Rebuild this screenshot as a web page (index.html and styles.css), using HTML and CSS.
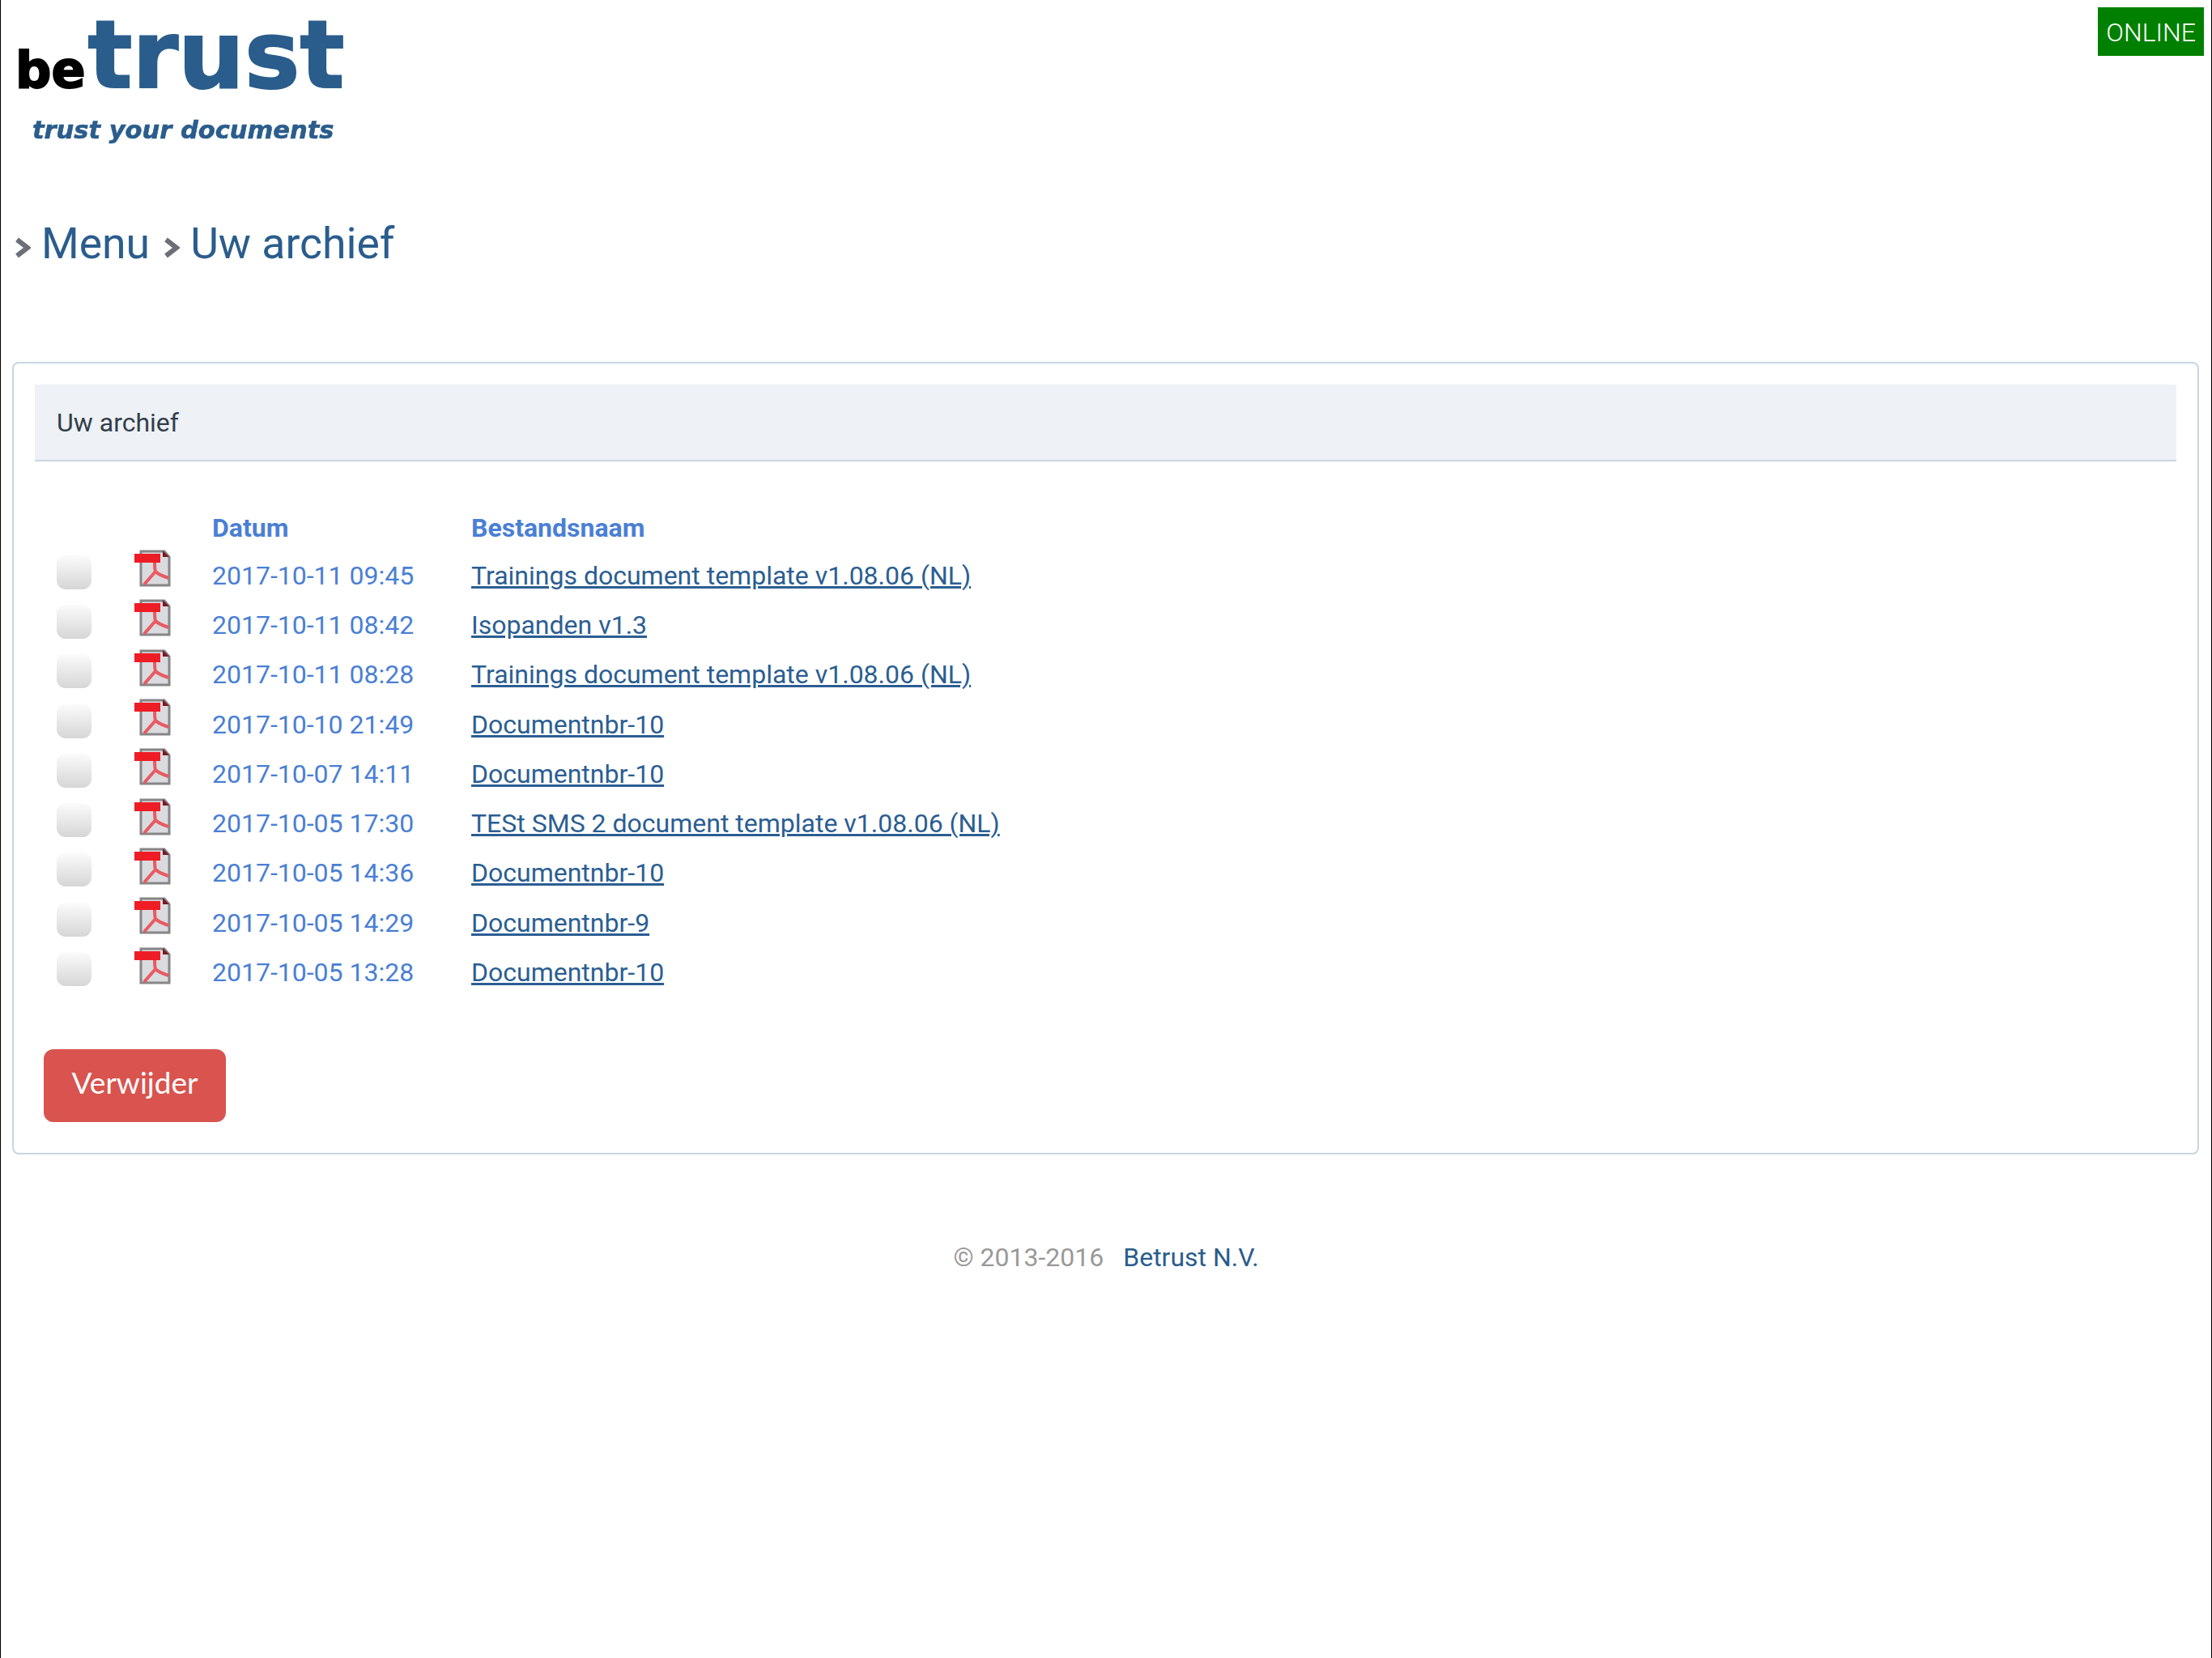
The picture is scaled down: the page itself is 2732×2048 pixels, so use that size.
FILE: index.html
```html
<!DOCTYPE html>
<html lang="nl">
<head>
    <meta charset="UTF-8">
    <title>Betrust - Uw archief</title>
    <link rel="stylesheet" href="styles.css">
</head>
<body>

<svg class="icon-defs" width="0" height="0">
    <symbol id="pdf-icon" viewBox="0 0 45 46">
        <path d="M8 2H37L43 9V44H8Z" fill="#dadbde" stroke="#868688" stroke-width="3"/>
        <path d="M35 1L43 9H35Z" fill="#7a1a24"/>
        <path d="M25 14C25 20 25 24 26 27M26 27L12 43M26 27C30 31 36 33 42 35" fill="none" stroke="#e95a63" stroke-width="4" stroke-linejoin="round"/>
        <rect x="0" y="5" width="32" height="11" fill="#ee1c25"/>
    </symbol>
</svg>

<header class="top-bar">
    <div class="logo">
        <div class="logo-name"><span class="logo-be">be</span><span class="logo-trust">trust</span></div>
        <div class="logo-tag">trust your documents</div>
    </div>
    <span class="status">ONLINE</span>
</header>

<nav class="breadcrumb">
    <svg class="crumb-arrow" viewBox="0 0 19 26"><path d="M2 3L15 13L2 23" fill="none" stroke="#6b6f78" stroke-width="6"/></svg>
    <a href="#">Menu</a>
    <svg class="crumb-arrow" viewBox="0 0 19 26"><path d="M2 3L15 13L2 23" fill="none" stroke="#6b6f78" stroke-width="6"/></svg>
    <a href="#">Uw archief</a>
</nav>

<main class="panel">
    <h2 class="panel-title">Uw archief</h2>

    <div class="archive">
        <div class="archive-row archive-head">
            <span></span>
            <span></span>
            <span>Datum</span>
            <span>Bestandsnaam</span>
        </div>
        <div class="archive-row">
            <input type="checkbox" class="pick">
            <svg class="pdf"><use href="#pdf-icon"/></svg>
            <span class="date">2017-10-11 09:45</span>
            <a href="#">Trainings document template v1.08.06 (NL)</a>
        </div>
        <div class="archive-row">
            <input type="checkbox" class="pick">
            <svg class="pdf"><use href="#pdf-icon"/></svg>
            <span class="date">2017-10-11 08:42</span>
            <a href="#">Isopanden v1.3</a>
        </div>
        <div class="archive-row">
            <input type="checkbox" class="pick">
            <svg class="pdf"><use href="#pdf-icon"/></svg>
            <span class="date">2017-10-11 08:28</span>
            <a href="#">Trainings document template v1.08.06 (NL)</a>
        </div>
        <div class="archive-row">
            <input type="checkbox" class="pick">
            <svg class="pdf"><use href="#pdf-icon"/></svg>
            <span class="date">2017-10-10 21:49</span>
            <a href="#">Documentnbr-10</a>
        </div>
        <div class="archive-row">
            <input type="checkbox" class="pick">
            <svg class="pdf"><use href="#pdf-icon"/></svg>
            <span class="date">2017-10-07 14:11</span>
            <a href="#">Documentnbr-10</a>
        </div>
        <div class="archive-row">
            <input type="checkbox" class="pick">
            <svg class="pdf"><use href="#pdf-icon"/></svg>
            <span class="date">2017-10-05 17:30</span>
            <a href="#">TESt SMS 2 document template v1.08.06 (NL)</a>
        </div>
        <div class="archive-row">
            <input type="checkbox" class="pick">
            <svg class="pdf"><use href="#pdf-icon"/></svg>
            <span class="date">2017-10-05 14:36</span>
            <a href="#">Documentnbr-10</a>
        </div>
        <div class="archive-row">
            <input type="checkbox" class="pick">
            <svg class="pdf"><use href="#pdf-icon"/></svg>
            <span class="date">2017-10-05 14:29</span>
            <a href="#">Documentnbr-9</a>
        </div>
        <div class="archive-row">
            <input type="checkbox" class="pick">
            <svg class="pdf"><use href="#pdf-icon"/></svg>
            <span class="date">2017-10-05 13:28</span>
            <a href="#">Documentnbr-10</a>
        </div>
    </div>

    <button class="btn-delete">Verwijder</button>
</main>

<footer class="footer">
    <span>© 2013-2016</span>
    <a href="#">Betrust N.V.</a>
</footer>

</body>
</html>
```

FILE: styles.css
```css
:root {
    --brand: #2a5d8c;
    --link: #2b5e92;
    --accent: #4a7fd4;
    --line: #c8d6e1;
}

html, body {
    height: 100%;
}

body {
    margin: 0;
    box-sizing: border-box;
    border-left: 1px solid #000;
    border-right: 1px solid #000;
    background-color: #fff;
    font-family: Roboto, "Liberation Sans", sans-serif;
    font-size: 32px;
    color: #333f4a;
}

.icon-defs {
    display: block;
    height: 0;
}

.top-bar {
    display: flex;
    justify-content: space-between;
    align-items: flex-start;
    box-sizing: border-box;
    height: 190px;
    padding: 9px 9px 0 18px;
}

.logo {
    padding-top: 5px;
    filter: blur(0.6px);
}

.logo-name {
    display: flex;
    align-items: baseline;
    height: 108px;
    line-height: 108px;
    font-family: "DejaVu Sans", sans-serif;
    font-weight: bold;
}

.logo-be {
    font-size: 62px;
    color: #000;
    -webkit-text-stroke: 2px #000;
}

.logo-trust {
    margin-left: 3px;
    font-size: 115px;
    color: var(--brand);
    -webkit-text-stroke: 2px var(--brand);
}

.logo-tag {
    margin: 22px 0 0 21px;
    font-family: "DejaVu Sans", sans-serif;
    font-size: 30.5px;
    line-height: 34px;
    font-weight: bold;
    font-style: italic;
    color: var(--brand);
    -webkit-text-stroke: 0.6px var(--brand);
}

.status {
    padding: 2px 10px 0;
    line-height: 58px;
    background-color: #008000;
    color: #fff;
    font-size: 32px;
    font-weight: 300;
}

.breadcrumb {
    display: flex;
    align-items: baseline;
    height: 257px;
    padding-left: 18px;
    padding-top: 81px;
    box-sizing: border-box;
    font-size: 53.5px;
    line-height: 60px;
}

.breadcrumb a {
    margin: 0 18px 0 13px;
    color: var(--brand);
    text-decoration: none;
}

.crumb-arrow {
    width: 19px;
    height: 26px;
    margin-bottom: -5px;
}

.panel {
    margin: 0 15px 0 14px;
    padding: 26px 26px 38px;
    border: 2px solid var(--line);
    border-radius: 8px;
}

.panel-title {
    margin: 0;
    padding: 0 27px;
    height: 95px;
    line-height: 95px;
    box-sizing: border-box;
    background-color: #eef1f6;
    border-bottom: 2px solid var(--line);
    font-size: 32px;
    font-weight: normal;
}

.archive {
    margin-top: 53px;
    padding-left: 27px;
}

.archive-row {
    display: grid;
    grid-template-columns: 96px 96px 320px 1fr;
    align-items: center;
    height: 61.3px;
    color: var(--accent);
}

.archive-head {
    height: 57px;
    font-weight: bold;
}

.archive-row a {
    color: var(--link);
}

.pick {
    appearance: none;
    width: 43px;
    height: 42px;
    margin: -8px 0 0;
    border-radius: 11px;
    background: linear-gradient(#fbfbfb, #d6d6d6);
}

.pdf {
    width: 45px;
    height: 46px;
    margin-top: -17px;
    filter: blur(0.4px);
}

.btn-delete {
    display: block;
    margin: 64px 0 0 11px;
    padding: 0 0 8px;
    width: 225px;
    height: 90px;
    border: 0;
    border-radius: 12px;
    background-color: #d9534f;
    color: #fff;
    font-family: Lato, sans-serif;
    font-size: 37px;
}

.footer {
    display: flex;
    justify-content: center;
    gap: 24px;
    margin-top: 108px;
    color: #999;
}

.footer a {
    color: var(--brand);
    text-decoration: none;
}
```
